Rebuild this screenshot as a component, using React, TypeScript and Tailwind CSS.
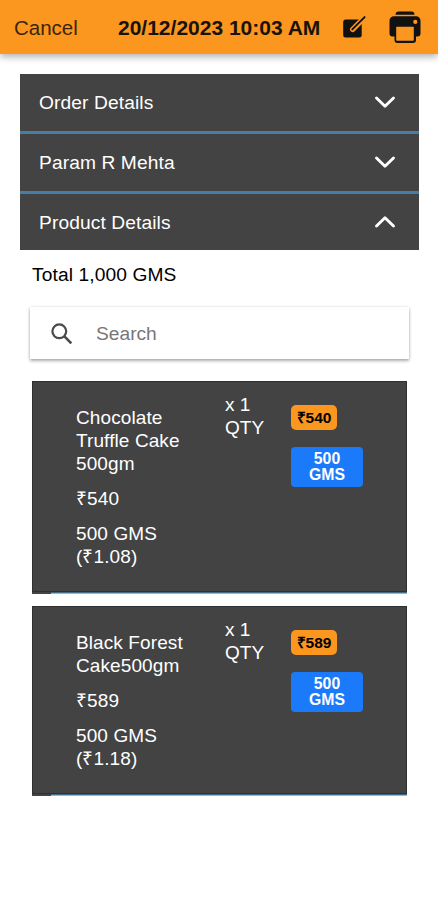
import { clsx } from 'clsx'

const sections = [
  { title: 'Order Details', open: false },
  { title: 'Param R Mehta', open: false },
  { title: 'Product Details', open: true },
]

const products = [
  { name: 'Chocolate Truffle Cake 500gm', price: '₹540', weight: '500 GMS', rate: '(₹1.08)', qty: 1 },
  { name: 'Black Forest Cake500gm', price: '₹589', weight: '500 GMS', rate: '(₹1.18)', qty: 1 },
]

function EditIcon() {
  return (
    <svg viewBox="0 0 24 24" className="h-6 w-6" fill="none">
      <path d="M3.700 4.500h14l2 2v13.500a2.500 2.500 0 0 1-2.500 2.500H3.700a2.500 2.500 0 0 1-2.500-2.500V7a2.500 2.500 0 0 1 2.500-2.500z" fill="#111" />
      <path d="M21 4 10.700 14.300" stroke="#fb961f" strokeWidth="5.400" strokeLinecap="round" />
      <path d="M22.600 2.100 10.300 14.400" stroke="#111" strokeWidth="1.900" strokeLinecap="round" />
    </svg>
  )
}

function PrinterIcon() {
  return (
    <svg viewBox="0 0 32 32" className="h-8 w-8" fill="none">
      <path d="M6.500 3.800Q6.500.500 9.800.500h12.400q3.300 0 3.300 3.300z" fill="#111" />
      <path
        d="M5 5.200h22a4.500 4.500 0 0 1 4.500 4.500v12.800a3 3 0 0 1-3 3H27v3.500a3 3 0 0 1-3 3H8.500a3 3 0 0 1-3-3v-3.500h-2a3 3 0 0 1-3-3V9.700A4.500 4.500 0 0 1 5 5.200z"
        fill="#111"
      />
      <rect x="7.200" y="15.700" width="17.600" height="14" rx="0.800" fill="#fb961f" />
      <circle cx="26.300" cy="10.900" r="2.100" fill="#fb961f" />
    </svg>
  )
}

function Chevron({ open }: { open: boolean }) {
  return (
    <svg viewBox="0 0 22 14" className={clsx('mb-[3px] h-3.5 w-[22px]', open && 'rotate-180')} fill="none">
      <path d="M2.500 3 11 11.200 19.500 3" stroke="#fff" strokeWidth="2.900" strokeLinecap="round" strokeLinejoin="round" />
    </svg>
  )
}

function ProductCard({ product }: { product: (typeof products)[number] }) {
  return (
    <article className="bg-[#434344] text-[19px] leading-[23px] tracking-[0.1px] text-white">
      <div className="flex border border-[#303031] pl-[43px]">
        <div className="w-[149px] space-y-3 pt-[24px] pb-[23px]">
          <p className="w-[120px]">{product.name}</p>
          <p>{product.price}</p>
          <p className="w-[100px]">
            {product.weight} {product.rate}
          </p>
        </div>
        <p className="w-[66px] pt-[11px] tracking-normal">
          x {product.qty}
          <br />
          QTY
        </p>
        <div className="flex flex-col items-start pt-[23px] font-bold tracking-normal">
          <span className="flex h-[25px] w-[46px] items-center justify-center rounded-[5px] bg-[#fb961f] text-[15.500px] leading-none text-black">
            {product.price}
          </span>
          <span className="mt-[17px] flex h-[40px] w-[72px] items-center justify-center rounded-[4px] bg-[#1a7afa] px-4 text-center text-[15.800px] leading-4">
            {product.weight}
          </span>
        </div>
      </div>
      <div className="ml-[19px] h-[2px] border-b border-[#8dbcda] bg-[#3f6b86]" />
    </article>
  )
}

export default function App() {
  return (
    <main className="min-h-[900px] w-[438px] bg-white font-['Liberation_Sans',Arial,sans-serif] text-[19.200px] text-black">
      <header className="flex h-[54px] items-center bg-[#fb961f] pl-3.5 shadow-[0_3px_7px_rgba(0,0,0,0.3)]">
        <button type="button" className="w-[104px] pt-0.5 text-left text-[20.500px] text-[#3b260c]">
          Cancel
        </button>
        <h1 className="w-[224px] pt-0.5 text-[21px] font-bold whitespace-nowrap text-[#1a1208]">20/12/2023 10:03 AM</h1>
        <button type="button" aria-label="Edit" className="w-[47px]">
          <EditIcon />
        </button>
        <button type="button" aria-label="Print">
          <PrinterIcon />
        </button>
      </header>

      <section className="mx-5 mt-5 w-[399px] divide-y-[3px] divide-[#467fa3] bg-[#434344] text-white">
        {sections.map((section) => (
          <div
            key={section.title}
            className="flex h-[60px] items-center justify-between pt-0.5 pr-[23px] pl-[19px] tracking-[0.1px] last:h-[56px]"
          >
            <span>{section.title}</span>
            <Chevron open={section.open} />
          </div>
        ))}
      </section>

      <p className="mt-[14px] ml-8 leading-[22px] tracking-[0.1px]">Total 1,000 GMS</p>

      <div className="mt-[21px] ml-[30px] flex h-[52px] w-[379px] items-center bg-white pt-0.5 pl-5 shadow-[0_2px_3px_rgba(0,0,0,0.3),0_0_3px_rgba(0,0,0,0.12)]">
        <svg viewBox="0 0 24 24" className="h-6 w-6" fill="none" stroke="#4a4a4a" strokeWidth="2.200">
          <circle cx="9.300" cy="9.300" r="6.900" />
          <path d="M14.200 14.200 21.300 21.300" strokeWidth="2.600" />
        </svg>
        <input
          type="text"
          placeholder="Search"
          className="ml-[22px] w-[280px] bg-transparent outline-none placeholder:text-[#777]"
        />
      </div>

      <div className="mt-[22px] ml-8 w-[375px] space-y-3">
        {products.map((product) => (
          <ProductCard key={product.name} product={product} />
        ))}
      </div>
    </main>
  )
}
